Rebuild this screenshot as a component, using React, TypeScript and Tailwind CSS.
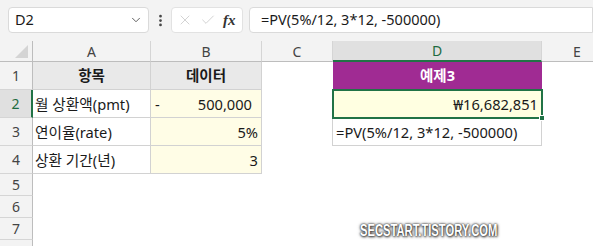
import React from "react";
import { ChevronDown, EllipsisVertical, X, Check } from "lucide-react";

const hdr = "flex items-center justify-center bg-[#f3f3f3] text-[14px] text-[#444] border-r border-b";

const RowHead = ({ n, selected }: { n?: number; selected?: boolean }) => (
  <div
    className={`flex items-center justify-center text-[14px] border-b border-b-[#d5d5d5] ${
      selected
        ? "bg-[#e0e0e0] text-[#1e6b40] border-r-2 border-r-[#217346]"
        : "bg-[#f3f3f3] text-[#444] border-r border-r-[#bdbdbd]"
    }`}
  >
    {n}
  </div>
);

export default function App() {
  return (
    <div
      className="relative w-[593px] h-[246px] overflow-hidden bg-white text-[#1a1a1a]"
      style={{ fontFamily: '"Noto Sans", "Noto Sans CJK KR", sans-serif' }}
    >
      {/* formula bar */}
      <div className="flex items-start h-[41px] bg-[#f3f3f3] pt-[7px] pl-[8px] gap-0">
        <div className="flex items-center justify-between w-[141px] h-[26px] bg-white border border-[#dadada] rounded-[4px] pl-[6px] pr-[5px] text-[14.5px]">
          <span>D2</span>
          <ChevronDown size={14} strokeWidth={1.6} className="text-[#555]" />
        </div>
        <div className="w-[22px] h-[26px] flex items-center justify-center">
          <EllipsisVertical size={15} strokeWidth={2.4} className="text-[#444]" />
        </div>
        <div className="flex items-center w-[72px] h-[26px] bg-white border border-[#e2e2e2] rounded-[4px] pl-[5px] gap-[7px]">
          <X size={16} strokeWidth={1.1} className="text-[#c2c2c2]" />
          <Check size={16} strokeWidth={1.1} className="text-[#c2c2c2]" />
          <span
            className="italic font-bold text-[15px] text-[#333] leading-none"
            style={{ fontFamily: '"Liberation Serif", serif' }}
          >
            fx
          </span>
        </div>
        <div className="ml-[6px] flex-1 h-[26px] bg-white border border-[#dadada] rounded-l-[4px] flex items-center pl-[11px] text-[14.5px]">
          =PV(5%/12, 3*12, -500000)
        </div>
      </div>

      {/* grid */}
      <div className="grid grid-cols-[33px_118px_111px_71px_209px_1fr] grid-rows-[21px_28px_28px_28px_28px_22px_22px_22px_22px]">
        {/* header row */}
        <div className="relative bg-[#f3f3f3] border-r border-b border-[#bdbdbd]">
          <div className="absolute right-[4px] bottom-[3px] w-0 h-0 border-l-[13px] border-l-transparent border-b-[13px] border-b-[#d4d4d4]" />
        </div>
        <div className={`${hdr} border-r-[#d5d5d5] border-b-[#bdbdbd]`}>A</div>
        <div className={`${hdr} border-r-[#d5d5d5] border-b-[#bdbdbd]`}>B</div>
        <div className={`${hdr} border-r-[#d5d5d5] border-b-[#bdbdbd]`}>C</div>
        <div className="flex items-center justify-center bg-[#e0e0e0] text-[14px] text-[#1e6b40] border-r border-r-[#d5d5d5] border-b-2 border-b-[#217346]">
          D
        </div>
        <div className={`${hdr} justify-start pl-[31px] border-r-0 border-b-[#bdbdbd]`}>E</div>

        {/* row 1 */}
        <RowHead n={1} />
        <div className="flex items-center justify-center bg-[#e9e9e9] font-bold text-[14.5px] border-r border-b border-[#d2d2d2]">
          항목
        </div>
        <div className="flex items-center justify-center bg-[#e9e9e9] font-bold text-[14.5px] border-r border-b border-[#d2d2d2]">
          데이터
        </div>
        <div />
        <div className="flex items-center justify-center bg-[#a02b93] text-white font-bold text-[14.5px]">
          예제3
        </div>
        <div />

        {/* row 2 */}
        <RowHead n={2} selected />
        <div className="flex items-center pl-[2px] text-[14.67px] border-r border-b border-[#d2d2d2]">
          월 상환액(pmt)
        </div>
        <div className="flex items-center justify-between pl-[4px] pr-[9px] bg-[#fffde6] text-[14.67px] border-r border-b border-[#d2d2d2]">
          <span>-</span>
          <span>500,000</span>
        </div>
        <div />
        <div className="relative flex items-center justify-end pr-[4px] bg-[#ffffe1] text-[14.67px]">
          ₩16,682,851
          <div className="absolute -left-[1px] -top-[1px] -right-[1px] -bottom-[1px] border-2 border-[#217346]" />
          <div className="absolute -right-[3px] -bottom-[3px] w-[6px] h-[6px] bg-[#217346] border border-white" />
        </div>
        <div />

        {/* row 3 */}
        <RowHead n={3} />
        <div className="flex items-center pl-[2px] text-[14.67px] border-r border-b border-[#d2d2d2]">
          연이율(rate)
        </div>
        <div className="flex items-center justify-end pr-[3px] bg-[#fffde6] text-[14.67px] border-r border-b border-[#d2d2d2]">
          5%
        </div>
        <div className="border-r border-[#d2d2d2]" />
        <div className="flex items-center pl-[3px] text-[14.67px] border-r border-b border-[#d2d2d2]">
          =PV(5%/12, 3*12, -500000)
        </div>
        <div />

        {/* row 4 */}
        <RowHead n={4} />
        <div className="flex items-center pl-[2px] text-[14.67px] border-r border-b border-[#d2d2d2]">
          상환 기간(년)
        </div>
        <div className="flex items-center justify-end pr-[3px] bg-[#fffde6] text-[14.67px] border-r border-b border-[#d2d2d2]">
          3
        </div>
        <div />
        <div />
        <div />

        {/* rows 5-8 */}
        {[5, 6, 7, 8].map((n) => (
          <React.Fragment key={n}>
            <RowHead n={n < 8 ? n : undefined} />
            <div className="col-span-5" />
          </React.Fragment>
        ))}
      </div>

      {/* watermark */}
      <div
        className="absolute left-[360px] top-[223px] origin-left scale-x-[0.7] text-white font-bold text-[16px] leading-none whitespace-nowrap [text-shadow:0_0_2px_#222,1px_1px_3px_#444,0_0_4px_#666]"
        style={{ fontFamily: '"Liberation Sans", sans-serif' }}
      >
        SECSTART.TISTORY.COM
      </div>
    </div>
  );
}
